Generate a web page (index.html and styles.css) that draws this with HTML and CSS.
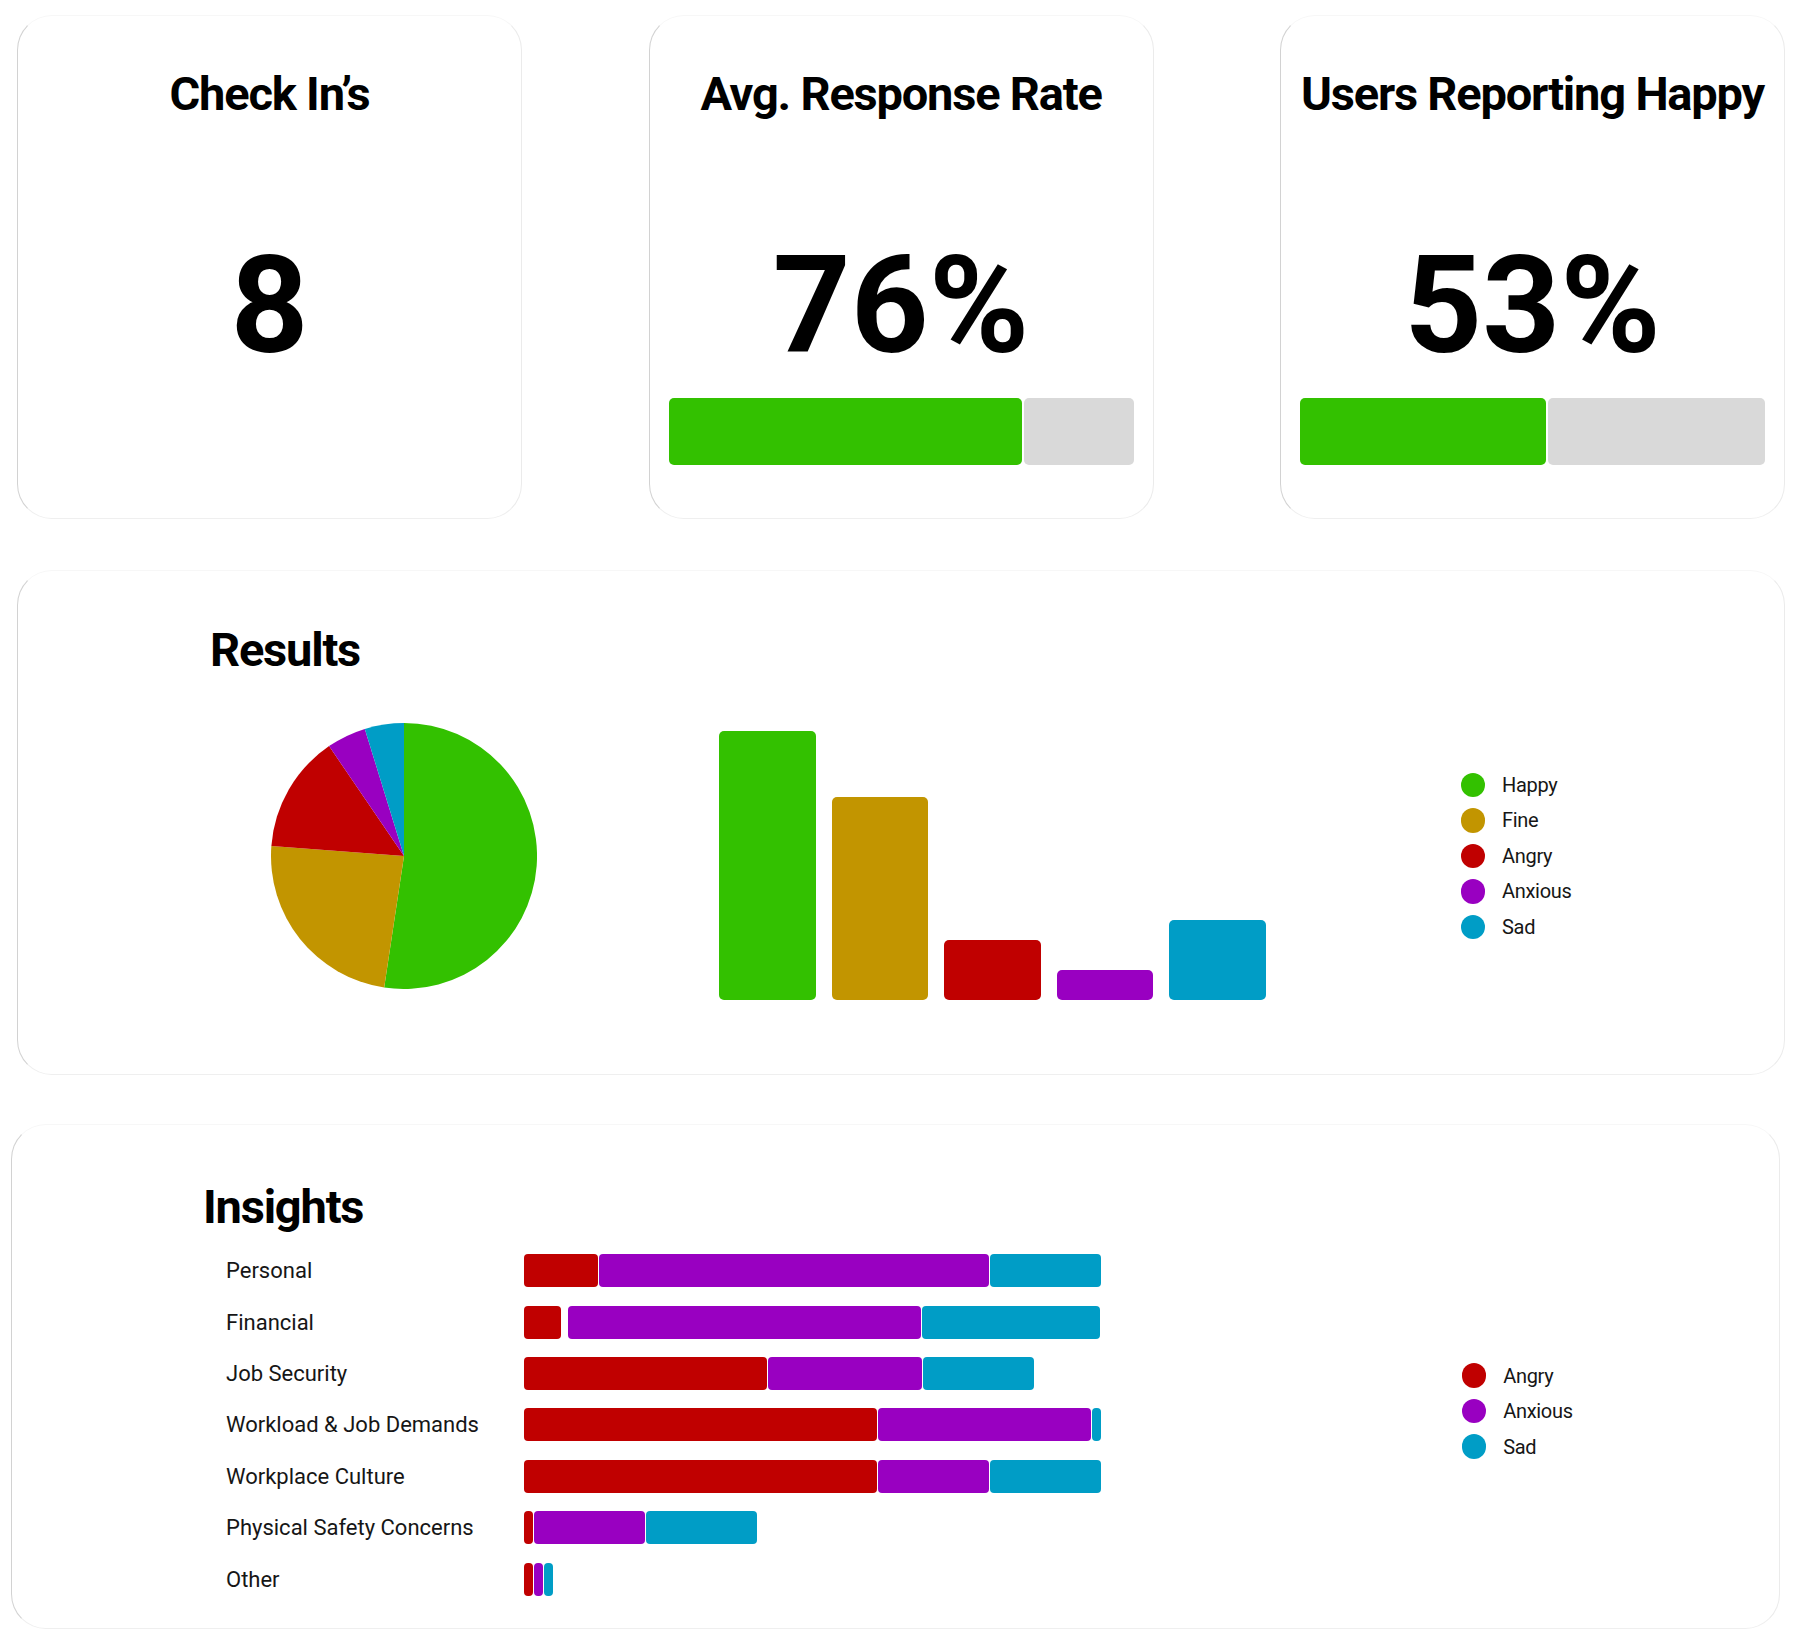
FILE: index.html
```html
<!DOCTYPE html>
<html lang="en">
<head>
<meta charset="utf-8">
<title>Check-in Dashboard</title>
<link rel="stylesheet" href="styles.css">
</head>
<body>
<div class="page">
  <section class="stats">
    <div class="card stat">
      <h2 class="title">Check In’s</h2>
      <div class="big">8</div>
    </div>
    <div class="card stat">
      <h2 class="title">Avg. Response Rate</h2>
      <div class="big">76%</div>
      <div class="progress"><span class="fill" style="width:76%"></span><span class="rest"></span></div>
    </div>
    <div class="card stat">
      <h2 class="title">Users Reporting Happy</h2>
      <div class="big">53%</div>
      <div class="progress"><span class="fill" style="width:53%"></span><span class="rest"></span></div>
    </div>
  </section>

  <section class="card results">
    <h2 class="title">Results</h2>
    <div class="chart-row">
      <svg class="pie" width="266" height="266" viewBox="-133 -133 266 266">
        <path class="c-happy" d="M0 0 L0 -133 A133 133 0 1 1 -19.82 131.51 Z"/>
        <path class="c-fine" d="M0 0 L-19.82 131.51 A133 133 0 0 1 -132.63 -9.94 Z"/>
        <path class="c-angry" d="M0 0 L-132.63 -9.94 A133 133 0 0 1 -74.92 -109.89 Z"/>
        <path class="c-anxious" d="M0 0 L-74.92 -109.89 A133 133 0 0 1 -39.20 -127.09 Z"/>
        <path class="c-sad" d="M0 0 L-39.20 -127.09 A133 133 0 0 1 0 -133 Z"/>
      </svg>
      <div class="bars">
        <div class="bar bg-happy" style="height:269px"></div>
        <div class="bar bg-fine" style="height:203px"></div>
        <div class="bar bg-angry" style="height:60px"></div>
        <div class="bar bg-anxious" style="height:30px"></div>
        <div class="bar bg-sad" style="height:80px"></div>
      </div>
      <ul class="legend results-legend">
        <li><span class="dot bg-happy"></span>Happy</li>
        <li><span class="dot bg-fine"></span>Fine</li>
        <li><span class="dot bg-angry"></span>Angry</li>
        <li><span class="dot bg-anxious"></span>Anxious</li>
        <li><span class="dot bg-sad"></span>Sad</li>
      </ul>
    </div>
  </section>

  <section class="card insights">
    <h2 class="title">Insights</h2>
    <div class="insights-body">
      <div class="rows">
        <div class="label">Personal</div>
        <div class="stack"><span class="seg bg-angry" style="width:74px"></span><span class="seg bg-anxious" style="width:390px"></span><span class="seg bg-sad" style="width:111px"></span></div>
        <div class="label">Financial</div>
        <div class="stack"><span class="seg bg-angry" style="width:37px"></span><span class="seg bg-anxious skip" style="width:353px"></span><span class="seg bg-sad" style="width:178px"></span></div>
        <div class="label">Job Security</div>
        <div class="stack"><span class="seg bg-angry" style="width:243px"></span><span class="seg bg-anxious" style="width:154px"></span><span class="seg bg-sad" style="width:111px"></span></div>
        <div class="label">Workload &amp; Job Demands</div>
        <div class="stack"><span class="seg bg-angry" style="width:353px"></span><span class="seg bg-anxious" style="width:213px"></span><span class="seg bg-sad" style="width:9px"></span></div>
        <div class="label">Workplace Culture</div>
        <div class="stack"><span class="seg bg-angry" style="width:353px"></span><span class="seg bg-anxious" style="width:111px"></span><span class="seg bg-sad" style="width:111px"></span></div>
        <div class="label">Physical Safety Concerns</div>
        <div class="stack"><span class="seg bg-angry" style="width:9px"></span><span class="seg bg-anxious" style="width:111px"></span><span class="seg bg-sad" style="width:111px"></span></div>
        <div class="label">Other</div>
        <div class="stack"><span class="seg bg-angry" style="width:9px"></span><span class="seg bg-anxious" style="width:9px"></span><span class="seg bg-sad" style="width:9px"></span></div>
      </div>
      <ul class="legend insights-legend">
        <li><span class="dot bg-angry"></span>Angry</li>
        <li><span class="dot bg-anxious"></span>Anxious</li>
        <li><span class="dot bg-sad"></span>Sad</li>
      </ul>
    </div>
  </section>
</div>
</body>
</html>
```

FILE: styles.css
```css
html, body {
  margin: 0;
  padding: 0;
  background: #ffffff;
}

body {
  font-family: Roboto, "Liberation Sans", Arial, sans-serif;
  color: #161616;
}

.page {
  padding: 15px 0 15px 17px;
  display: flex;
  flex-direction: column;
  align-items: flex-start;
}

.card {
  box-sizing: border-box;
  background: #ffffff;
  border: 1px solid #efefef;
  border-left-color: #d2d2d2;
  border-top-color: #f7f7f7;
  border-right-color: #ebebeb;
  border-radius: 35px;
}

.title {
  margin: 0;
  font-size: 47px;
  line-height: 56px;
  font-weight: 700;
  letter-spacing: -1.2px;
  color: #000000;
  white-space: nowrap;
}

/* Top stat cards */
.stats {
  display: grid;
  grid-template-columns: repeat(3, 505px);
  column-gap: 126.5px;
}

.stat {
  height: 504px;
  padding: 50px 19px 0;
  display: flex;
  flex-direction: column;
  align-items: center;
}

.big {
  margin-top: 116px;
  font-size: 136px;
  line-height: 136px;
  font-weight: 700;
  color: #000000;
  letter-spacing: 0;
}

.progress {
  margin-top: 24px;
  width: 100%;
  height: 67px;
  display: flex;
  gap: 2px;
}

.progress .fill {
  flex: none;
  background: #33c100;
  border-radius: 5px;
}

.progress .rest {
  flex: 1;
  background: #d9d9d9;
  border-radius: 5px;
}

/* Results */
.results {
  margin-top: 51px;
  width: 1768px;
  height: 505px;
  padding-top: 51px;
}

.results .title {
  margin-left: 192px;
}

.chart-row {
  display: flex;
  align-items: flex-start;
  margin-top: 45px;
  margin-left: 253px;
}

.pie {
  flex: none;
  display: block;
}

.bars {
  margin-left: 182px;
  height: 277px;
  display: flex;
  align-items: flex-end;
  gap: 16px;
}

.bar {
  width: 96.5px;
  border-radius: 5px;
}

.legend {
  list-style: none;
  margin: 0;
  padding: 0;
}

.legend li {
  height: 35.5px;
  display: flex;
  align-items: center;
  gap: 17px;
  font-size: 20px;
  letter-spacing: -0.3px;
  color: #161616;
}

.dot {
  width: 24.5px;
  height: 24.5px;
  border-radius: 50%;
  flex: none;
}

.results-legend {
  margin-left: 195px;
  margin-top: 44px;
}

/* Insights */
.insights {
  margin-top: 49px;
  margin-left: -6px;
  width: 1769px;
  height: 505px;
  padding-top: 54px;
}

.insights .title {
  margin-left: 191px;
}

.insights-body {
  display: flex;
  align-items: flex-start;
  margin-top: 19.3px;
  margin-left: 214px;
}

.rows {
  display: grid;
  grid-template-columns: 297.7px 578px;
  grid-auto-rows: 33px;
  row-gap: 18.4px;
}

.label {
  display: flex;
  align-items: center;
  font-size: 22px;
  letter-spacing: 0;
  white-space: nowrap;
  color: #161616;
}

.stack {
  display: flex;
  gap: 1px;
  height: 33px;
}

.seg {
  flex: none;
  height: 33px;
  border-radius: 4px;
}

.seg.skip {
  margin-left: 6.5px;
}

.insights-legend {
  margin-left: 360px;
  margin-top: 103.7px;
}

/* Colours */
.c-happy { fill: #33c100; }
.c-fine { fill: #c29500; }
.c-angry { fill: #c00000; }
.c-anxious { fill: #9900c1; }
.c-sad { fill: #009dc6; }

.bg-happy { background: #33c100; }
.bg-fine { background: #c29500; }
.bg-angry { background: #c00000; }
.bg-anxious { background: #9900c1; }
.bg-sad { background: #009dc6; }
```
